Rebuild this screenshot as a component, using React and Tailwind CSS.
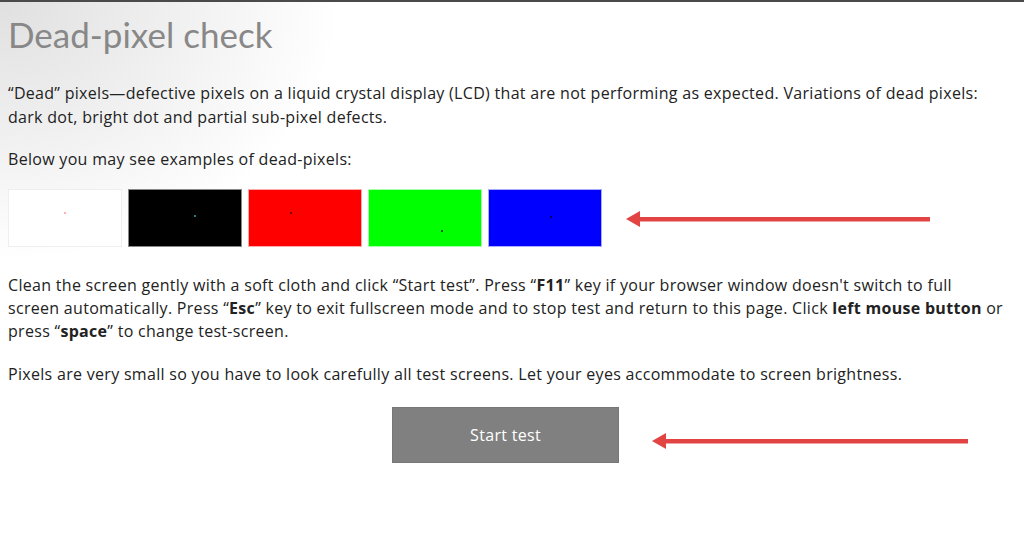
import React from 'react';

const swatches = [
  { bg: 'bg-white', border: 'border-[#eeeeee]', dot: 'bg-[#ffb0b0]', x: 'left-[55px]', y: 'top-[22px]' },
  { bg: 'bg-black', border: 'border-[#888888]', dot: 'bg-[#208080]', x: 'left-[65px]', y: 'top-[25px]' },
  { bg: 'bg-[#ff0000]', border: 'border-[#ffaaaa]', dot: 'bg-[#800000]', x: 'left-[41px]', y: 'top-[22px]' },
  { bg: 'bg-[#00ff00]', border: 'border-[#aaffaa]', dot: 'bg-[#006000]', x: 'left-[72px]', y: 'top-[40px]' },
  { bg: 'bg-[#0000ff]', border: 'border-[#aaaaff]', dot: 'bg-[#000060]', x: 'left-[61px]', y: 'top-[26px]' },
];

const Arrow = ({ width }) => (
  <svg width={width} height="18" viewBox={`0 0 ${width} 18`}>
    <path d={`M0 9 L14 1 L14 17 Z`} fill="#e24444" />
    <rect x="12" y="7" width={width - 12} height="4.5" fill="#e24444" />
  </svg>
);

export default function App() {
  return (
    <div className="min-h-screen w-full border-t-2 border-[#4a4a4a] bg-[radial-gradient(ellipse_340px_260px_at_0_0,#e0e0e0_0%,#ffffff_100%)] font-['Open_Sans',sans-serif] tracking-[0.3px] text-[#222222]">
      <div className="pl-2 pr-[21px]">
        <h1 className="pt-[12px] font-['Lato',sans-serif] tracking-normal text-[35px] leading-[40px] text-[#888888] font-normal">Dead-pixel check</h1>

        <p className="mt-[27px] text-[16px] leading-[24px]">
          “Dead” pixels—defective pixels on a liquid crystal display (LCD) that are not performing as expected. Variations of dead pixels: dark dot, bright dot and partial sub-pixel defects.
        </p>

        <p className="mt-[18px] text-[16px] leading-[24px]">Below you may see examples of dead-pixels:</p>

        <div className="mt-[18px] flex items-center">
          <div className="flex gap-[6px]">
            {swatches.map((s, i) => (
              <div key={i} className={`relative w-[114px] h-[58px] border ${s.bg} ${s.border}`}>
                <span className={`absolute w-[2px] h-[2px] ${s.dot} ${s.x} ${s.y}`} />
              </div>
            ))}
          </div>
          <div className="ml-[24px] mt-[2px]">
            <Arrow width={304} />
          </div>
        </div>

        <p className="mt-[27px] text-[16px] leading-[23px]">
          Clean the screen gently with a soft cloth and click “Start test”. Press “<b>F11</b>” key if your browser window doesn't switch to full screen automatically. Press “<b>Esc</b>” key to exit fullscreen mode and to stop test and return to this page. Click <b>left mouse button</b> or press “<b>space</b>” to change test-screen.
        </p>

        <p className="mt-[19px] text-[16px] leading-[24px]">
          Pixels are very small so you have to look carefully all test screens. Let your eyes accommodate to screen brightness.
        </p>

        <div className="mt-[21px] flex justify-center relative">
          <button className="w-[227px] h-[56px] bg-[#808080] text-white text-[16px] border border-[#777777]">Start test</button>
          <div className="absolute left-[644px] top-[25px]">
            <Arrow width={316} />
          </div>
        </div>
      </div>
    </div>
  );
}
